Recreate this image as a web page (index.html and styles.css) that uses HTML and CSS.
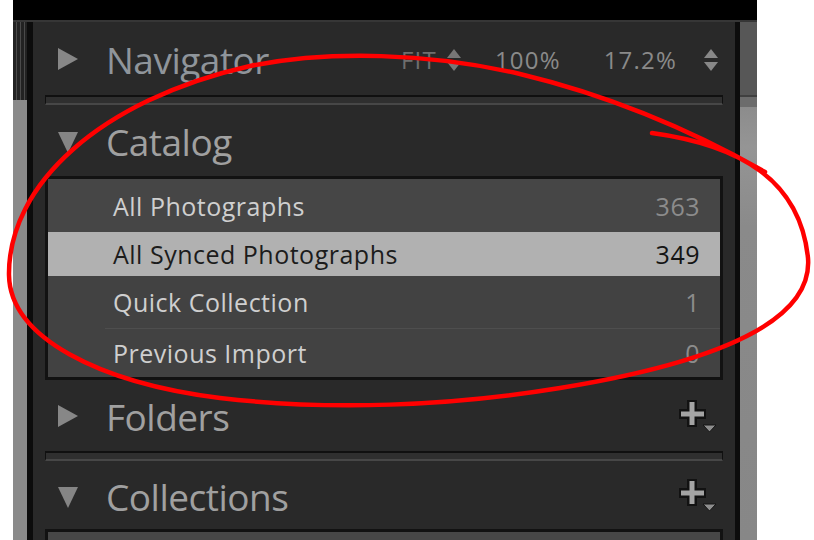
FILE: index.html
```html
<!DOCTYPE html>
<html>
<head>
<meta charset="utf-8">
<link rel="stylesheet" href="styles.css">
</head>
<body>
<div class="app">
  <div class="topbar"></div>
  <div class="main">
    <div class="lscroll"><div class="grip"></div></div>
    <div class="lborder"></div>
    <div class="panel">
      <div class="hdr h-nav">
        <span class="tri right"></span>
        <span class="title">Navigator</span>
        <div class="navctl">
          <span class="fit">FIT</span>
          <svg class="ud ud1" width="14" height="24" viewBox="0 0 14 24"><polygon points="0,10 14,10 7,1" fill="#777"/><polygon points="0,14 14,14 7,23" fill="#777"/></svg>
          <span class="pct p100">100%</span>
          <span class="pct p17">17.2%</span>
          <svg class="ud ud2" width="14" height="24" viewBox="0 0 14 24"><polygon points="0,10 14,10 7,1" fill="#888"/><polygon points="0,14 14,14 7,23" fill="#888"/></svg>
        </div>
      </div>
      <div class="sep"></div>
      <div class="hdr h-cat">
        <span class="tri down"></span>
        <span class="title">Catalog</span>
      </div>
      <div class="box">
        <div class="row r1"><span class="name">All Photographs</span><span class="cnt">363</span></div>
        <div class="row r2 sel"><span class="name">All Synced Photographs</span><span class="cnt">349</span></div>
        <div class="row r3"><span class="name">Quick Collection</span><span class="cnt">1</span></div>
        <div class="row r4"><span class="name">Previous Import</span><span class="cnt">0</span></div>
      </div>
      <div class="hdr h-fold">
        <span class="tri right"></span>
        <span class="title">Folders</span>
        <svg class="plus" width="40" height="36" viewBox="0 0 40 36"><path d="M14 2v27M1 16h27" stroke="#121212" stroke-width="10"/><path d="M14 4v23M3 16h23" stroke="#a4a4a4" stroke-width="5"/><polygon points="25,27 38,27 31.5,34" fill="#8e8e8e" stroke="#141414" stroke-width="1"/></svg>
      </div>
      <div class="sep"></div>
      <div class="hdr h-coll">
        <span class="tri down"></span>
        <span class="title">Collections</span>
        <svg class="plus" width="40" height="36" viewBox="0 0 40 36"><path d="M14 2v27M1 16h27" stroke="#121212" stroke-width="10"/><path d="M14 4v23M3 16h23" stroke="#a4a4a4" stroke-width="5"/><polygon points="25,27 38,27 31.5,34" fill="#8e8e8e" stroke="#141414" stroke-width="1"/></svg>
      </div>
      <div class="box bottom"></div>
    </div>
    <div class="rborder"></div>
    <div class="rscroll">
      <div class="rtop"></div>
      <div class="rband"></div>
      <div class="rthumb"></div>
    </div>
  </div>
  <svg class="annot" width="814" height="540" viewBox="0 0 814 540">
    <path d="M652 133 C 740 145, 800 180, 808 258 C 813 320, 720 362, 560 388 C 450 406, 330 411, 220 398 C 100 383, 10 338, 9 275 C 8 185, 100 100, 250 66 C 330 50, 430 53, 520 74 C 620 98, 700 135, 765 172" fill="none" stroke="#f00" stroke-width="4.5" stroke-linecap="round"/>
  </svg>
</div>
</body>
</html>
```
FILE: styles.css
```css
html, body {
  margin: 0;
  padding: 0;
  background: #fff;
}
.app {
  position: relative;
  width: 814px;
  height: 540px;
  overflow: hidden;
  display: flex;
  flex-direction: column;
  padding-left: 13px;
  box-sizing: border-box;
  font-family: "Open Sans", "DejaVu Sans", sans-serif;
}
.topbar {
  width: 744px;
  height: 20px;
  background: #000;
  border-bottom: 2px solid #363636;
  flex: none;
}
.main {
  display: flex;
  width: 744px;
  flex: 1;
}
.lscroll {
  width: 14px;
  background: #8a8a8a;
  flex: none;
}
.grip {
  height: 78px;
  background: repeating-linear-gradient(90deg, #222 0 3px, #4a4a4a 3px 4px);
}
.lborder {
  width: 6px;
  background: #0c0c0c;
  flex: none;
}
.panel {
  flex: 1;
  background: #292929;
  display: flex;
  flex-direction: column;
}
.rborder {
  width: 5px;
  background: #0c0c0c;
  flex: none;
}
.rscroll {
  width: 17px;
  flex: none;
  display: flex;
  flex-direction: column;
}
.rtop {
  height: 73px;
  background: #575757;
}
.rband {
  height: 10px;
  background: #6c6c6c;
  border-top: 2px solid #404040;
}
.rthumb {
  flex: 1;
  background: linear-gradient(180deg, #8c8c8c 0, #959595 40px, #8a8a8a 120px, #878787 100%);
}
.hdr {
  display: flex;
  align-items: center;
  padding-left: 25px;
  padding-right: 17px;
  flex: none;
}
.h-nav { height: 73px; }
.h-cat { height: 71px; }
.h-fold { height: 71px; }
.h-coll { height: 68px; }
.title {
  font-size: 37px;
  color: #a0a0a0;
  margin-left: 28px;
  letter-spacing: -0.5px;
  line-height: 1;
  padding-top: 2px;
}
.h-nav .title { color: #8f959b; }
.tri { display: block; width: 0; height: 0; flex: none; }
.tri.right {
  border-left: 20px solid #878787;
  border-top: 11px solid transparent;
  border-bottom: 11px solid transparent;
}
.tri.down {
  border-top: 21px solid #858585;
  border-left: 10px solid transparent;
  border-right: 10px solid transparent;
  margin-top: 4px;
}
.navctl {
  margin-left: auto;
  display: flex;
  align-items: center;
  font-size: 24px;
  letter-spacing: 1.2px;
  padding-top: 2px;
}
.fit { color: #6e6e6e; }
.pct { color: #8a8a8a; }
.ud1 { margin-left: 10px; }
.p100 { margin-left: 34px; }
.p17 { margin-left: 43px; }
.ud2 { margin-left: 27px; }
.sep {
  height: 6px;
  margin: 0 12px;
  background: #2f2f2f;
  border: 1px solid #101010;
  border-top-width: 2px;
  border-bottom: 2px solid #474747;
  flex: none;
}
.box {
  margin: 0 12px;
  border: 3px solid #121212;
  background: #424242;
  flex: none;
}
.row {
  display: flex;
  align-items: center;
  justify-content: space-between;
  padding-left: 65px;
  padding-right: 20px;
  font-size: 25px;
  color: #cfcfcf;
  letter-spacing: 0.5px;
}
.row .cnt { color: #8c8c8c; }
.r1 { height: 53px; background: #464646; }
.r2 { height: 44px; }
.r3 {
  height: 52px;
  border-bottom: 1px solid #4d4d4d;
  border-image: linear-gradient(90deg, transparent 0 58px, #4e4e4e 58px) 1;
}
.r4 { height: 48px; }
.sel { background: #b1b1b1; color: #1c1c1c; }
.sel .cnt { color: #141414; }
.box.bottom {
  flex: 1;
  border-bottom: none;
  background: #474747;
}
.plus { margin-left: auto; }
.annot {
  position: absolute;
  left: 0;
  top: 0;
  pointer-events: none;
}
```
